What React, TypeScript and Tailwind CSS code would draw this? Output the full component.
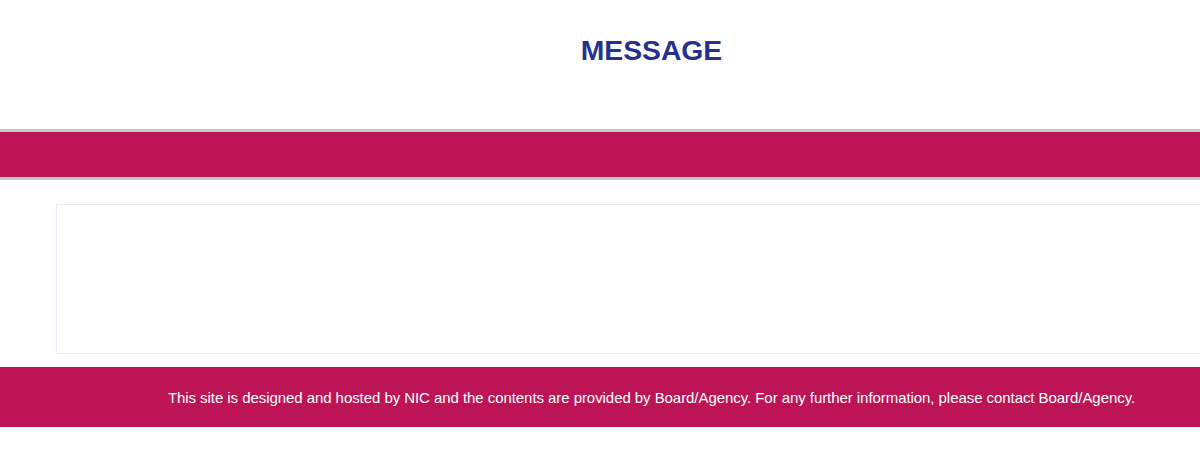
export default function App() {
  return (
    <div className="w-full overflow-hidden bg-white" style={{ fontFamily: '"Liberation Sans", Arial, sans-serif' }}>
      <div className="w-[1303px]">
        {/* Title */}
        <div className="h-[129px] pt-[32px] text-center">
          <h1 className="text-[28.3px] font-bold leading-[36px] text-[#25318c]">MESSAGE</h1>
        </div>

        {/* Nav bar */}
        <div className="h-[51px] border-y-[3px] border-[#c8c8c8] bg-[#bd1456]" />

        {/* Content */}
        <div className="px-[56px] pt-[24px] pb-[13px]">
          <div className="h-[150px] border border-[#e3ecf7] bg-white" />
        </div>

        {/* Footer */}
        <div className="flex h-[60px] items-center justify-center bg-[#bd1456] pt-[2px]">
          <p className="text-[15px] tracking-[-0.06px] text-white">
            This site is designed and hosted by NIC and the contents are provided by Board/Agency. For any further information, please contact Board/Agency.
          </p>
        </div>
      </div>
    </div>
  )
}
